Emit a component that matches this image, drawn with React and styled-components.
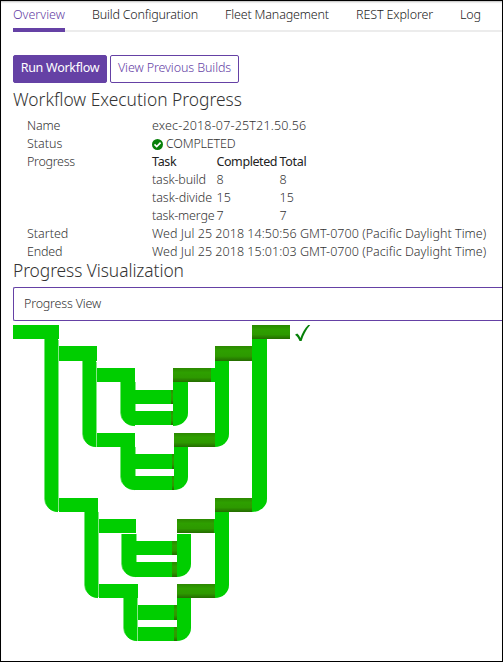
import React from "react";
import styled, { createGlobalStyle } from "styled-components";

const Global = createGlobalStyle`
  * { box-sizing: border-box; }
  body {
    margin: 0;
    background: #fff;
    color: #333;
    font: 300 12.5px/18px "Noto Sans", "Open Sans", sans-serif;
  }
`;

const Page = styled.main`
  width: 503px;
  height: 662px;
  border: 1px solid #000;
  padding-left: 12px;
  overflow: hidden;
  display: flex;
  flex-direction: column;
  box-shadow: inset 0 2px 2px -1px #bbb;
`;

const Tracked = styled.span`
  letter-spacing: ${(p) => p.$track || 0}px;
  white-space: nowrap;
`;

const Tabs = styled.nav`
  display: flex;
  gap: 27px;
  height: 31px;
  flex: none;
  padding-top: 5px;
  box-shadow: inset 0 -2px #ececec;
`;

const Tab = styled.a`
  width: ${(p) => p.$width}px;
  height: 26px;
  color: ${(p) => (p.$active ? "#6541a5" : "#222")};
  border-bottom: 4px solid ${(p) => (p.$active ? "#6541a5" : "transparent")};
`;

const Actions = styled.div`
  display: flex;
  gap: 3px;
  height: 28px;
  flex: none;
  margin-top: 23px;
`;

const Button = styled.button`
  width: ${(p) => p.$width}px;
  height: 28px;
  padding: 0 0 2px;
  border: 1px solid #6541a5;
  border-radius: 2px;
  background: ${(p) => (p.$primary ? "#6541a5" : "#fff")};
  color: ${(p) => (p.$primary ? "#fff" : "#6541a5")};
  font: inherit;
  font-weight: ${(p) => (p.$primary ? 400 : 300)};
`;

const Heading = styled.h2`
  margin: ${(p) => p.$top || 0}px 0 0;
  height: 21px;
  flex: none;
  font-size: 17.4px;
  font-weight: 300;
  line-height: 18px;
`;

const Details = styled.dl`
  margin: 6px 0 0 14px;
  display: grid;
  grid-template-columns: 125px 1fr;
  flex: none;
`;

const Term = styled.dt`
  margin: 0;
`;

const Value = styled.dd`
  margin: 0;
  display: flex;
  align-items: center;
  gap: 3px;
`;

const TaskTable = styled.div`
  display: grid;
  grid-template-columns: 64.5px 63px 40px;
  grid-auto-rows: 18px;
`;

const ColumnTitle = styled(Tracked)`
  font-weight: 400;
  color: #222;
`;

const ViewPanel = styled.div`
  flex: none;
  height: 34px;
  margin-top: 5px;
  padding: 7px 10px;
  border: 1px solid #6541a5;
  border-right: 0;
  border-radius: 2px 0 0 2px;
`;

const Chart = styled.svg`
  display: block;
  flex: none;
  margin-top: 1px;
`;

const StatusIcon = () => (
  <svg width="11" height="11" viewBox="0 0 11 11">
    <circle cx="5.5" cy="5.5" r="5.5" fill="#078009" />
    <path d="M2.5 5.4 4.7 7.5 8.6 3.6" fill="none" stroke="#fff" strokeWidth="1.7" />
  </svg>
);

const tabs = [
  ["Overview", 52, 0],
  ["Build Configuration", 106, -0.19],
  ["Fleet Management", 104, -0.16],
  ["REST Explorer", 77, -0.12],
  ["Log", 21, -0.2],
];

const tasks = [
  ["task-build", 8, -0.13],
  ["task-divide", 15, -0.05],
  ["task-merge", 7, -0.18],
];

/* [x, y, width, height] */
const startedBars = [
  [13, 325, 46, 14], [59, 346, 38, 15], [97, 368, 38, 14],
  [134, 390, 38, 14], [134, 411, 38, 14],
  [96.5, 433, 38.5, 14], [134, 454, 38, 15], [134, 476, 38, 14],
  [59, 498, 39, 14], [99, 519, 37, 14],
  [135, 541, 37, 14], [135, 562, 37, 15],
  [99, 584, 39, 14], [138, 605, 36, 15], [138, 627, 36, 14],
  [211, 368, 4, 14], [214, 519, 1, 14],
];

const finishedBars = [
  [252, 325, 38, 14], [215, 346, 37, 15], [173, 368, 38, 14],
  [171, 390, 2, 14], [171, 411, 2, 14],
  [174, 433, 41, 14], [172, 454, 2, 15], [172, 476, 2, 14],
  [215, 498, 37, 14], [177, 519, 37, 14],
  [172, 541, 5, 14], [172, 562, 5, 15],
  [177, 584, 38, 14], [174, 605, 3, 15], [174, 627, 3, 14],
];

/* [left, top, right, bottom] */
const forks = [
  [45, 339, 58, 512], [83, 361, 96, 447], [121, 382, 135, 426],
  [121, 447, 135, 490], [85, 512, 98, 598], [122, 534, 136, 577],
  [124, 598, 137, 641],
];

const joins = [
  [252, 339, 267, 512], [215, 361, 229, 447], [173, 382, 188, 426],
  [174, 447, 188, 490], [215, 512, 229, 598], [177, 534, 191, 577],
  [177, 598, 191, 641],
];

const forkPath = ([l, t, r, b]) => `M${l} ${t}H${r}V${b}A${r - l} 13 0 0 1 ${l} ${b - 13}Z`;
const joinPath = ([l, t, r, b]) => `M${l} ${t}H${r}V${b - 13}A${r - l} 13 0 0 1 ${l} ${b}Z`;

const ProgressChart = () => (
  <Chart width="489" height="336" viewBox="13 322 489 336">
    <defs>
      <linearGradient id="finished" x1="0" y1="0" x2="0" y2="1">
        <stop offset="0" stopColor="#2b8800" />
        <stop offset=".32" stopColor="#2e9f00" />
        <stop offset=".68" stopColor="#2d9900" />
        <stop offset="1" stopColor="#246b00" />
      </linearGradient>
    </defs>
    {startedBars.map(([x, y, width, height]) => (
      <rect key={`${x}-${y}`} x={x} y={y} width={width} height={height} fill="#00ce00" />
    ))}
    {forks.map((f) => (
      <React.Fragment key={forkPath(f)}>
        <path d={forkPath(f)} fill="#00ce00" />
        <path
          d={`M${f[0] - 0.5} ${f[1]}V${f[3] - 13}A14 13 0 0 0 ${f[2]} ${f[3] - 0.3}`}
          fill="none"
          stroke="#00ce00"
          strokeOpacity=".55"
        />
      </React.Fragment>
    ))}
    {[
      [58, 340, 511], [96, 362, 446], [135, 382, 390], [135, 404, 411],
      [135, 447, 454], [135, 469, 476], [98, 512, 597],
      [136, 534, 541], [136, 555, 562], [137, 598, 641],
    ].map(([x, top, bottom]) => (
      <path key={`${x}-${top}`} d={`M${x + 0.5} ${top}V${bottom}`} stroke="#86e786" />
    ))}
    {finishedBars.map(([x, y, width, height]) => (
      <rect key={`${x}-${y}`} x={x} y={y} width={width} height={height} fill="url(#finished)" />
    ))}
    {joins.map((j) => (
      <path key={joinPath(j)} d={joinPath(j)} fill="#00ce00" />
    ))}
    <path
      d="M295 334.8 297.2 333.6C298.7 334.8 299.7 336.4 300.4 338.1 302 333.5 304.7 328.2 308.2 325L310.2 325C306.2 329.5 303.5 335 301.6 341L299.5 341C298.6 338.5 297.2 336.5 295 334.8Z"
      fill="#078009"
    />
  </Chart>
);

export default function App() {
  return (
    <>
      <Global />
      <Page>
        <Tabs>
          {tabs.map(([name, width, track], i) => (
            <Tab key={name} $width={width} $active={i === 0}>
              <Tracked $track={track}>{name}</Tracked>
            </Tab>
          ))}
        </Tabs>
        <Actions>
          <Button $primary $width={94}>
            <Tracked $track={-0.27}>Run Workflow</Tracked>
          </Button>
          <Button $width={129}>
            <Tracked $track={-0.1}>View Previous Builds</Tracked>
          </Button>
        </Actions>
        <Heading $top={7}>Workflow Execution Progress</Heading>
        <Details>
          <Term><Tracked $track={-0.2}>Name</Tracked></Term>
          <Value><Tracked $track={0.17}>exec-2018-07-25T21.50.56</Tracked></Value>
          <Term>Status</Term>
          <Value>
            <StatusIcon />
            <Tracked $track={-0.2}>COMPLETED</Tracked>
          </Value>
          <Term><Tracked $track={-0.3}>Progress</Tracked></Term>
          <Value>
            <TaskTable>
              <ColumnTitle $track={-0.3}>Task</ColumnTitle>
              <ColumnTitle $track={-0.42}>Completed</ColumnTitle>
              <ColumnTitle $track={-0.28}>Total</ColumnTitle>
              {tasks.map(([name, count, track]) => (
                <React.Fragment key={name}>
                  <Tracked $track={track}>{name}</Tracked>
                  <span>{count}</span>
                  <span>{count}</span>
                </React.Fragment>
              ))}
            </TaskTable>
          </Value>
          <Term>Started</Term>
          <Value>
            <Tracked $track={0.04}>Wed Jul 25 2018 14:50:56 GMT-0700 (Pacific Daylight Time)</Tracked>
          </Value>
          <Term><Tracked $track={-0.2}>Ended</Tracked></Term>
          <Value>
            <Tracked $track={0.04}>Wed Jul 25 2018 15:01:03 GMT-0700 (Pacific Daylight Time)</Tracked>
          </Value>
        </Details>
        <Heading>
          <Tracked $track={-0.07}>Progress Visualization</Tracked>
        </Heading>
        <ViewPanel>
          <Tracked $track={-0.2}>Progress View</Tracked>
        </ViewPanel>
        <ProgressChart />
      </Page>
    </>
  );
}
